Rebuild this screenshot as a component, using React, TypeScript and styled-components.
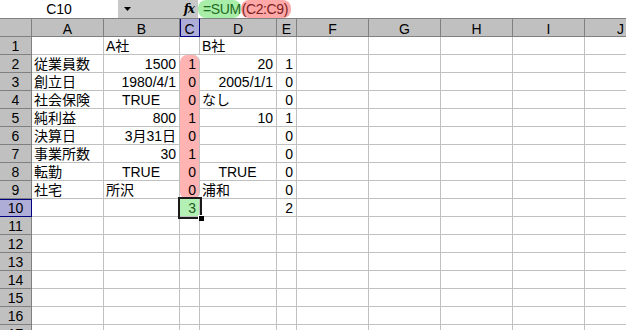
import React from 'react';
import styled, { createGlobalStyle, css } from 'styled-components';

const GlobalStyle = createGlobalStyle`
  html, body {
    margin: 0;
    padding: 0;
    background: #ffffff;
  }
  body {
    font-family: "Liberation Sans", "Noto Sans CJK JP", sans-serif;
    font-size: 14px;
    color: #000;
    overflow: hidden;
  }
`;

const COLS = [32, 72, 76, 20, 77, 20, 72, 72, 72, 72, 72];
const LETTERS = ['A', 'B', 'C', 'D', 'E', 'F', 'G', 'H', 'I', 'J'];

// '>' right aligned, '^' centred, otherwise left
const DATA: string[][] = [
  ['', 'A社', '', 'B社', ''],
  ['従業員数', '>1500', '>1', '>20', '>1'],
  ['創立日', '>1980/4/1', '>0', '>2005/1/1', '>0'],
  ['社会保険', '^TRUE', '>0', 'なし', '>0'],
  ['純利益', '>800', '>1', '>10', '>1'],
  ['決算日', '>3月31日', '>0', '', '>0'],
  ['事業所数', '>30', '>1', '', '>0'],
  ['転勤', '^TRUE', '>0', '^TRUE', '>0'],
  ['社宅', '所沢', '>0', '浦和', '>0'],
  ['', '', '>3', '', '>2'],
];

const ROW_COUNT = 17;

const TopBar = styled.div`
  display: flex;
  height: 18px;
  background: #ffffff;
`;

const NameBox = styled.div`
  width: 118px;
  text-align: center;
  line-height: 18px;
  background: #ffffff;
`;

const BarTools = styled.div`
  width: 80px;
  display: flex;
  align-items: center;
  justify-content: space-between;
  padding: 0 4px 0 6px;
  box-sizing: border-box;
  background: #c8c8c8;
`;

const Fx = styled.span`
  font-family: "DejaVu Serif", "Liberation Serif", serif;
  font-style: italic;
  font-weight: bold;
  font-size: 12px;
  letter-spacing: -1px;
`;

const Formula = styled.div`
  flex: 1;
  display: flex;
  align-items: flex-start;
  background: #ffffff;
`;

const Token = styled.span<{ $tone: 'fn' | 'ref' }>`
  box-sizing: border-box;
  height: 18px;
  padding-top: 1px;
  line-height: 17px;
  font-size: 14px;
  letter-spacing: -0.4px;
  border-radius: 8px;
  ${(p) =>
    p.$tone === 'fn'
      ? css`
          background: #a8eea8;
          color: #1f6a1f;
          padding-left: 5px;
          padding-right: 0;
        `
      : css`
          background: #ffa8a8;
          color: #7a2020;
          padding-left: 1px;
          padding-right: 3px;
        `}
`;

const Sheet = styled.div`
  display: grid;
  grid-template-columns: ${COLS.map((w) => w + 'px').join(' ')};
  grid-template-rows: 19px;
  grid-auto-rows: 18px;
`;

const HeadCell = styled.div<{ $sel?: boolean }>`
  box-sizing: border-box;
  background: #c0c0c0;
  border-top: 1px solid #808080;
  border-right: 1px solid #808080;
  border-bottom: 1px solid #808080;
  text-align: center;
  line-height: 20px;
  overflow: hidden;
  ${(p) =>
    p.$sel &&
    css`
      background: #adadd8;
      border-right-color: #000080;
      border-bottom-color: #000080;
      box-shadow: inset 1px 0 0 #000080;
    `}
`;

const RowHead = styled.div<{ $sel?: boolean }>`
  box-sizing: border-box;
  background: #c0c0c0;
  border-right: 1px solid #808080;
  border-bottom: 1px solid #808080;
  text-align: center;
  line-height: 19px;
  overflow: hidden;
  ${(p) =>
    p.$sel &&
    css`
      background: #adadd8;
      border-right-color: #000080;
      border-bottom-color: #000080;
      box-shadow: inset 0 1px 0 #000080;
    `}
`;

type Band = 'top' | 'mid' | 'bottom';

const Cell = styled.div<{ $align: string; $band?: Band; $active?: boolean }>`
  box-sizing: border-box;
  border-right: 1px solid #c0c0c0;
  border-bottom: 1px solid #c0c0c0;
  line-height: 19px;
  padding: 0 3px 0 2px;
  white-space: nowrap;
  overflow: hidden;
  text-align: ${(p) => (p.$align === 'r' ? 'right' : p.$align === 'c' ? 'center' : 'left')};
  ${(p) =>
    p.$band &&
    css`
      background: #ffb3b3;
      border-bottom-color: #ffb3b3;
    `}
  ${(p) =>
    p.$band === 'top' &&
    css`
      border-top-left-radius: 7px;
      border-top-right-radius: 7px;
    `}
  ${(p) =>
    p.$band === 'bottom' &&
    css`
      border-bottom-left-radius: 7px;
      border-bottom-right-radius: 7px;
      border-bottom-color: transparent;
    `}
  ${(p) =>
    p.$active &&
    css`
      position: relative;
      overflow: visible;
      z-index: 1;
      background: #b3f0b3;
      color: #1f5a1f;
      outline: 2px solid #1a1a1a;
    `}
`;

const FillHandle = styled.span`
  position: absolute;
  right: -5px;
  bottom: -5px;
  width: 5px;
  height: 5px;
  background: #000;
  border: 1px solid #fff;
  border-width: 1px 0 0 1px;
`;

function parse(raw: string) {
  if (raw.startsWith('>')) return { v: raw.slice(1), a: 'r' };
  if (raw.startsWith('^')) return { v: raw.slice(1), a: 'c' };
  return { v: raw, a: 'l' };
}

const App: React.FC = () => {
  const rows = Array.from({ length: ROW_COUNT }, (_, i) => i);

  return (
    <>
      <GlobalStyle />
      <TopBar>
        <NameBox>C10</NameBox>
        <BarTools>
          <svg width="8" height="5" viewBox="0 0 8 5">
            <path d="M0 0 H7 L3.5 4 Z" fill="#000" />
          </svg>
          <Fx>fx</Fx>
        </BarTools>
        <Formula>
          <Token $tone="fn">=SUM</Token>
          <Token $tone="ref">(C2:C9)</Token>
        </Formula>
      </TopBar>

      <Sheet>
        <HeadCell />
        {LETTERS.map((l) => (
          <HeadCell key={l} $sel={l === 'C'}>
            {l}
          </HeadCell>
        ))}

        {rows.map((r) => {
          const data = DATA[r] || [];
          return (
            <React.Fragment key={r}>
              <RowHead $sel={r === 9}>{r + 1}</RowHead>
              {LETTERS.map((l, c) => {
                const { v, a } = parse(data[c] || '');
                let band: Band | undefined;
                if (c === 2 && r >= 1 && r <= 8) {
                  band = r === 1 ? 'top' : r === 8 ? 'bottom' : 'mid';
                }
                const active = c === 2 && r === 9;
                return (
                  <Cell key={l} $align={a} $band={band} $active={active}>
                    {v}
                    {active && <FillHandle />}
                  </Cell>
                );
              })}
            </React.Fragment>
          );
        })}
      </Sheet>
    </>
  );
};

export default App;
